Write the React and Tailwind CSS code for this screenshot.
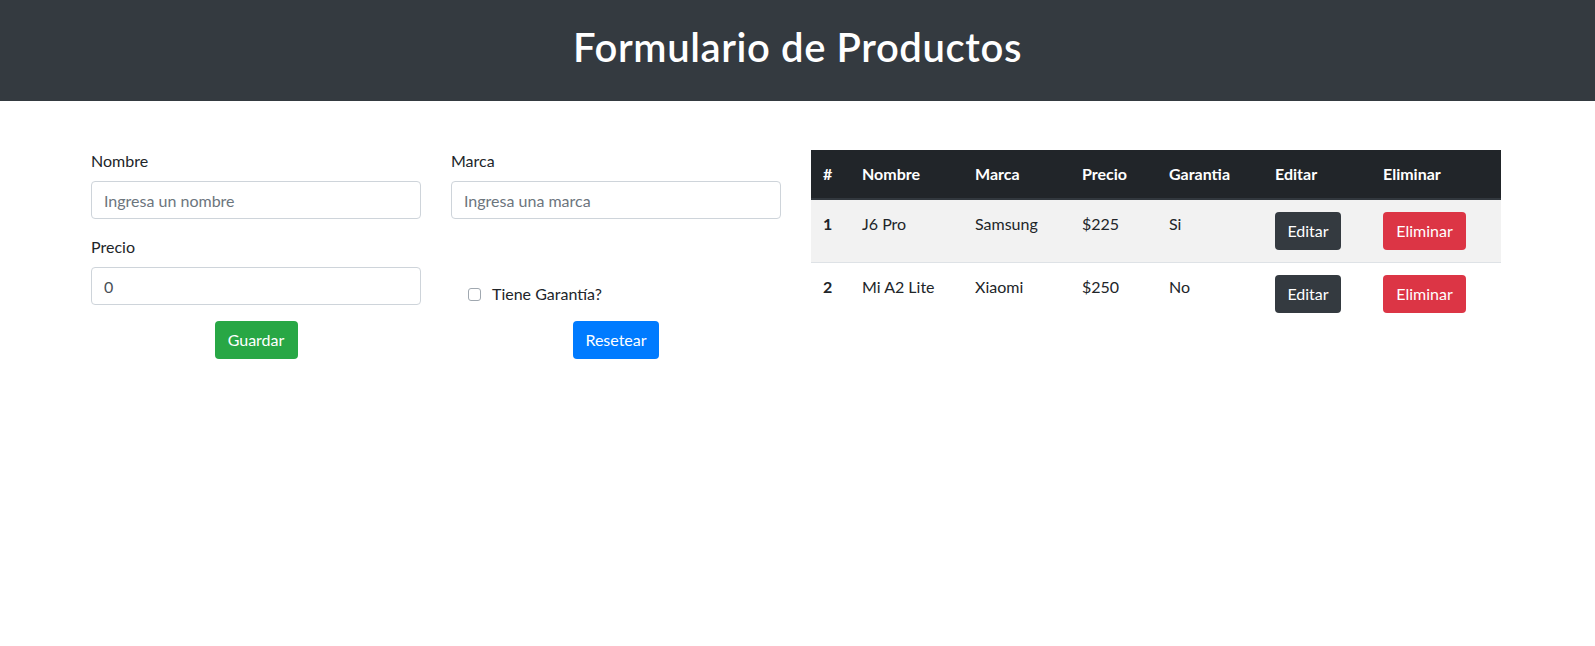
import React from "react";

const products = [
  { id: 1, nombre: "J6 Pro", marca: "Samsung", precio: "$225", garantia: "Si" },
  { id: 2, nombre: "Mi A2 Lite", marca: "Xiaomi", precio: "$250", garantia: "No" },
];

function Field({ label, placeholder, value }) {
  return (
    <div className="flex flex-col">
      <label className="mb-2 leading-6 text-[16px] text-[#212529]">{label}</label>
      <input
        readOnly
        placeholder={placeholder}
        value={value ?? ""}
        className="h-[38px] w-full rounded-[4px] border border-[#ced4da] bg-white px-3 text-[16px] text-[#495057] placeholder:text-[#6c757d] outline-none"
      />
    </div>
  );
}

export default function App() {
  return (
    <div className="min-h-[646px] bg-white font-[Lato,'Liberation_Sans',sans-serif] text-[#212529]">
      <header className="flex h-[101px] items-center justify-center bg-[#343a40] pb-2">
        <h1 className="text-[40px] font-semibold leading-[48px] tracking-[0.6px] text-white">Formulario de Productos</h1>
      </header>

      <main className="flex gap-[30px] pl-[91px] pt-[48px]">
        <form className="grid w-[690px] grid-cols-2 content-start gap-x-[30px]" onSubmit={(e) => e.preventDefault()}>
          <Field label="Nombre" placeholder="Ingresa un nombre" />
          <Field label="Marca" placeholder="Ingresa una marca" />
          <div className="mt-4">
            <Field label="Precio" value="0" />
          </div>
          <div className="mt-4 flex items-end">
            <label className="mb-[-1px] ml-[17px] flex items-center leading-6 text-[16px]">
              <span className="mr-[11px] inline-block h-[13px] w-[13px] rounded-[3px] border border-[#a0a8b0] bg-white" />
              Tiene Garantía?
            </label>
          </div>
          <div className="mt-4 flex justify-center">
            <button type="button" className="h-[38px] w-[83px] rounded-[4px] bg-[#28a745] text-[16px] text-white">
              Guardar
            </button>
          </div>
          <div className="mt-4 flex justify-center">
            <button type="button" className="h-[38px] w-[86px] rounded-[4px] bg-[#007bff] text-[16px] text-white">
              Resetear
            </button>
          </div>
        </form>

        <table className="mt-px w-[690px] table-fixed border-collapse self-start text-[16px] leading-6">
          <colgroup>
            <col className="w-[39px]" />
            <col className="w-[113px]" />
            <col className="w-[107px]" />
            <col className="w-[87px]" />
            <col className="w-[106px]" />
            <col className="w-[108px]" />
            <col className="w-[130px]" />
          </colgroup>
          <thead>
            <tr className="bg-[#212529] text-white">
              {["#", "Nombre", "Marca", "Precio", "Garantia", "Editar", "Eliminar"].map((h) => (
                <th key={h} className="border-b-2 border-[#32383e] p-3 text-left font-bold">
                  {h}
                </th>
              ))}
            </tr>
          </thead>
          <tbody>
            {products.map((p, i) => (
              <tr key={p.id} className={i % 2 === 0 ? "bg-[#f2f2f2]" : "bg-white"}>
                <th className="border-t border-[#dee2e6] p-3 text-left align-top font-bold">{p.id}</th>
                <td className="border-t border-[#dee2e6] p-3 align-top">{p.nombre}</td>
                <td className="border-t border-[#dee2e6] p-3 align-top">{p.marca}</td>
                <td className="border-t border-[#dee2e6] p-3 align-top">{p.precio}</td>
                <td className="border-t border-[#dee2e6] p-3 align-top">{p.garantia}</td>
                <td className="border-t border-[#dee2e6] p-3 align-top">
                  <button type="button" className="h-[38px] w-[66px] rounded-[4px] bg-[#343a40] text-white">
                    Editar
                  </button>
                </td>
                <td className="border-t border-[#dee2e6] p-3 align-top">
                  <button type="button" className="h-[38px] w-[83px] rounded-[4px] bg-[#dc3545] text-white">
                    Eliminar
                  </button>
                </td>
              </tr>
            ))}
          </tbody>
        </table>
      </main>
    </div>
  );
}
